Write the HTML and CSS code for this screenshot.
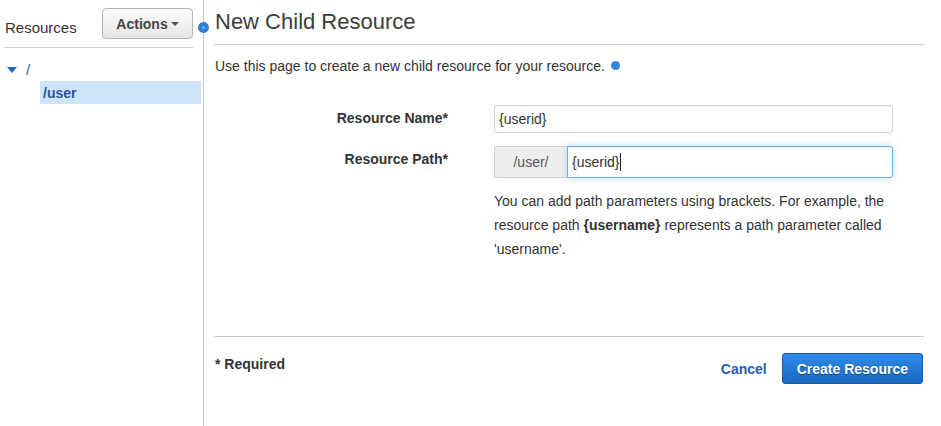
FILE: index.html
```html
<!DOCTYPE html>
<html lang="en">
<head>
<meta charset="utf-8">
<title>New Child Resource</title>
<link rel="stylesheet" href="styles.css">
</head>
<body>
<div class="app">
  <aside class="sidebar">
    <div class="side-head">
      <span class="side-title">Resources</span>
      <button class="btn-actions" type="button">Actions<span class="caret-sm"></span></button>
    </div>
    <ul class="tree">
      <li class="tree-root"><span class="tree-caret"></span><span class="tree-label">/</span></li>
      <li class="tree-item selected">/user</li>
    </ul>
  </aside>
  <span class="resize-handle"></span>
  <main class="content">
    <h1 class="title">New Child Resource</h1>
    <p class="intro">Use this page to create a new child resource for your resource. <span class="info-dot"></span></p>
    <div class="form">
      <label class="form-label" for="rname">Resource Name*</label>
      <input id="rname" class="text-input" type="text" value="{userid}">
      <label class="form-label" for="rpath">Resource Path*</label>
      <div class="input-group">
        <span class="addon">/user/</span>
        <span class="focus-wrap">
          <input id="rpath" class="text-input focused" type="text" value="{userid}">
          <span class="text-caret"></span>
        </span>
      </div>
      <span></span>
      <p class="help">You can add path parameters using brackets. For example, the resource path <b>{username}</b> represents a path parameter called 'username'.</p>
    </div>
    <footer class="footer">
      <span class="required">* Required</span>
      <div class="footer-actions">
        <a class="cancel" href="#">Cancel</a>
        <button class="btn-primary" type="button">Create Resource</button>
      </div>
    </footer>
  </main>
</div>
</body>
</html>
```

FILE: styles.css
```css
* { box-sizing: border-box; }
html, body { margin: 0; padding: 0; background: #fff; }
body {
  font-family: "Liberation Sans", Arial, Helvetica, sans-serif;
  font-size: 14px;
  color: #333;
}
.app {
  position: relative;
  display: flex;
  height: 426px;
}
.sidebar {
  width: 204px;
  flex: none;
  border-right: 1px solid #cacaca;
}
.side-head {
  display: flex;
  align-items: center;
  justify-content: space-between;
  margin: 0 10px 0 4px;
  padding: 8px 0 8px 1px;
  border-bottom: 1px solid #cfcfcf;
}
.side-title {
  font-size: 15px;
  color: #333;
  padding-top: 7px;
}
.btn-actions {
  width: 91px;
  height: 31px;
  padding: 0;
  border: 1px solid #b5b5b5;
  border-radius: 4px;
  background: linear-gradient(#fbfbfb, #e6e6e6);
  font-family: inherit;
  font-size: 14px;
  font-weight: bold;
  color: #444;
  display: flex;
  align-items: center;
  justify-content: center;
  gap: 3px;
}
.caret-sm {
  width: 0;
  height: 0;
  border-left: 4px solid transparent;
  border-right: 4px solid transparent;
  border-top: 4px solid #555;
  margin-top: 1px;
}
.tree {
  list-style: none;
  margin: 0;
  padding: 11px 0 0;
}
.tree-root {
  display: flex;
  align-items: center;
  gap: 9px;
  height: 20px;
  padding-left: 7px;
}
.tree-caret {
  width: 0;
  height: 0;
  border-left: 5px solid transparent;
  border-right: 5px solid transparent;
  border-top: 6px solid #1f66c4;
  margin-top: 1px;
}
.tree-label {
  color: #2a5fae;
  font-size: 15px;
}
.tree-item {
  margin: 2px 2px 0 40px;
  height: 23px;
  line-height: 24px;
  padding-left: 3px;
  font-weight: bold;
  font-size: 14px;
  color: #2a5499;
}
.tree-item.selected { background: #cde4fa; }
.resize-handle {
  position: absolute;
  left: 198px;
  top: 22px;
  width: 11px;
  height: 11px;
  border-radius: 50%;
  background: radial-gradient(circle, #6aa9ee 0 20%, #2f82dc 30%);
  border: 1px solid #2674cf;
}
.content {
  flex: 1;
  display: flex;
  flex-direction: column;
  padding: 0 17px 0 10px;
}
.title {
  margin: 0;
  padding: 8px 0 8px 1px;
  font-size: 22px;
  line-height: 28px;
  font-weight: normal;
  color: #3d3d3d;
  border-bottom: 1px solid #cccccc;
}
.intro {
  margin: 11px 0 0 1px;
  line-height: 20px;
  color: #333;
}
.info-dot {
  display: inline-block;
  width: 9px;
  height: 9px;
  border-radius: 50%;
  background: #2f86dd;
  margin-left: 2px;
  vertical-align: 1px;
}
.form {
  display: grid;
  grid-template-columns: 234px 399px;
  column-gap: 46px;
  row-gap: 13px;
  margin-top: 29px;
}
.form-label {
  text-align: right;
  font-weight: bold;
  color: #333;
  line-height: 20px;
  padding-top: 3px;
}
.text-input {
  height: 28px;
  width: 100%;
  border: 1px solid #d2d2d2;
  border-radius: 3px;
  padding: 0 4px;
  font-family: inherit;
  font-size: 14px;
  color: #333;
  background: #fff;
  box-shadow: inset 0 1px 1px rgba(0,0,0,0.04);
  outline: none;
}
.input-group {
  display: flex;
  height: 32px;
}
.addon {
  width: 73px;
  flex: none;
  display: flex;
  align-items: center;
  justify-content: center;
  background: #eeeeee;
  border: 1px solid #cfcfcf;
  border-right: none;
  border-radius: 3px 0 0 3px;
  color: #555;
}
.focus-wrap {
  position: relative;
  flex: 1;
  display: flex;
}
.text-input.focused {
  height: 32px;
  border-color: #66afe9;
  border-radius: 0 3px 3px 0;
  box-shadow: inset 0 1px 1px rgba(0,0,0,0.05), 0 0 7px rgba(102,175,233,0.45);
}
.text-caret {
  position: absolute;
  left: 53px;
  top: 7px;
  width: 1px;
  height: 18px;
  background: #222;
}
.help {
  margin: -2px 0 0;
  line-height: 24px;
  color: #333;
}
.help b { color: #333; }
.footer {
  margin-top: auto;
  display: flex;
  justify-content: space-between;
  align-items: flex-start;
  border-top: 1px solid #cccccc;
  padding: 16px 1px 42px 1px;
}
.required {
  font-weight: bold;
  line-height: 20px;
  margin-top: 1px;
  color: #333;
}
.footer-actions {
  display: flex;
  align-items: center;
  gap: 15px;
}
.cancel {
  font-weight: bold;
  color: #1f5fb5;
  text-decoration: none;
}
.btn-primary {
  height: 31px;
  padding: 0 14px;
  border: 1px solid #165aa8;
  border-radius: 3px;
  background: linear-gradient(#2d8ce8, #1a68c4);
  color: #fff;
  font-family: inherit;
  font-size: 14px;
  font-weight: bold;
  text-shadow: 0 1px 1px rgba(0,0,0,0.45);
}
```
